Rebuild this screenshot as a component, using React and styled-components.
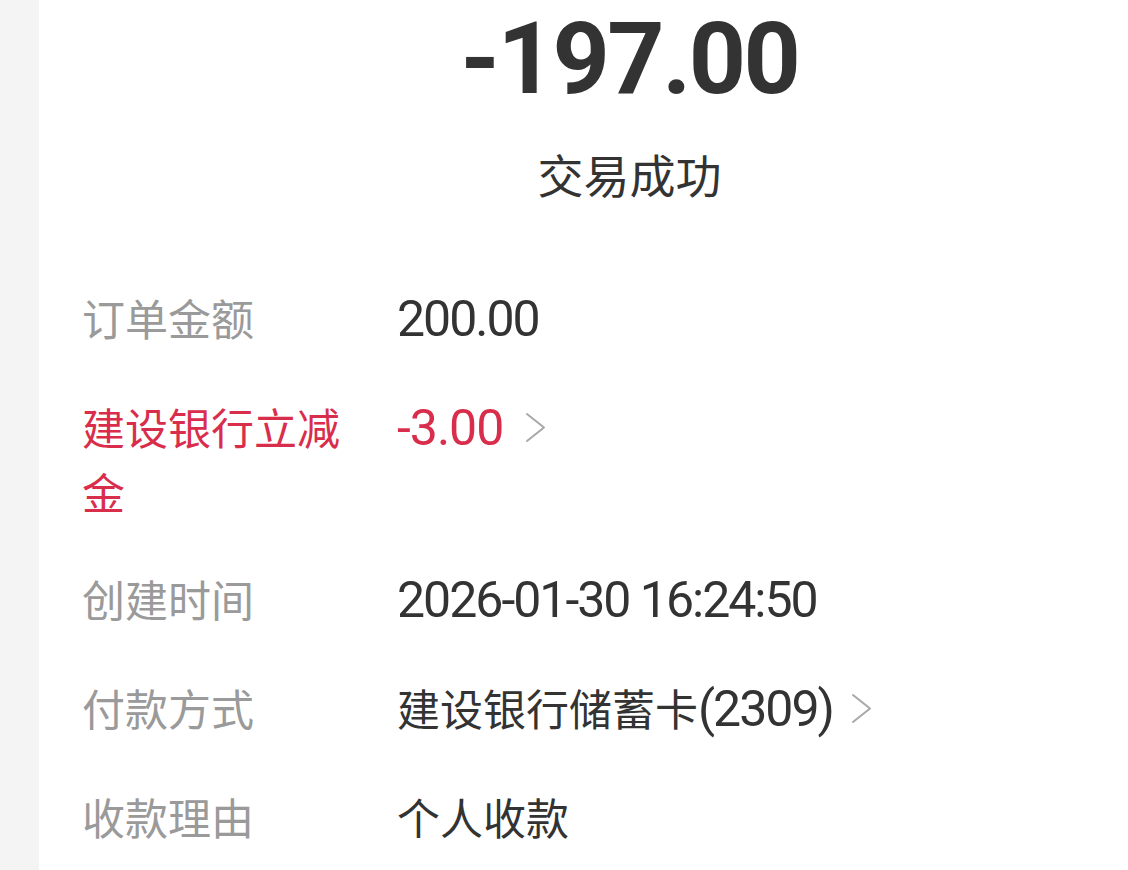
import React from "react";
import styled, { createGlobalStyle } from "styled-components";

const GlobalStyle = createGlobalStyle`
  html, body {
    margin: 0;
    padding: 0;
    background: #ffffff;
  }
  body {
    font-family: "Noto Sans CJK SC", "Noto Sans", sans-serif;
    -webkit-font-smoothing: antialiased;
  }
`;

const Page = styled.div`
  display: flex;
  width: 1128px;
  height: 870px;
  overflow: hidden;
  background: #ffffff;
`;

const SideStrip = styled.div`
  flex: 0 0 39px;
  background: #f4f4f4;
`;

const Panel = styled.main`
  flex: 1;
  display: flex;
  flex-direction: column;
  background: #ffffff;
`;

const Header = styled.header`
  display: flex;
  flex-direction: column;
  align-items: center;
  padding-left: 92px;
`;

const Amount = styled.div`
  margin-top: 9px;
  font-family: "Roboto", "Liberation Sans", sans-serif;
  font-weight: 700;
  font-size: 100px;
  line-height: 100px;
  letter-spacing: -2.5px;
  color: #333333;
`;

const Status = styled.div`
  margin-top: 34px;
  font-family: "Noto Sans CJK SC", sans-serif;
  font-size: 46px;
  line-height: 60px;
  color: #333333;
`;

const DetailList = styled.dl`
  margin: 82px 0 0;
  padding: 0 0 0 43px;
  display: flex;
  flex-direction: column;
  gap: 42px;
`;

const Row = styled.div`
  display: flex;
  align-items: flex-start;
  line-height: 65px;
`;

const Label = styled.dt`
  flex: 0 0 280px;
  margin: 0 35px 0 0;
  font-family: "Noto Sans CJK SC", sans-serif;
  font-size: 43px;
  line-height: 65px;
  color: ${(p) => (p.$accent ? "#d92d4c" : "#9a9a9a")};
`;

const Value = styled.dd`
  margin: 0;
  display: flex;
  align-items: center;
  gap: ${(p) => (p.$accent ? "22px" : "18px")};
  color: ${(p) => (p.$accent ? "#d92d4c" : "#333333")};
`;

const ValueText = styled.span`
  font-family: "Noto Sans CJK SC", sans-serif;
  font-size: 43px;
  line-height: 65px;
  white-space: nowrap;
`;

const Num = styled.span`
  font-family: "Roboto", "Noto Sans", sans-serif;
  font-size: 50px;
  letter-spacing: ${(p) => (p.$loose ? "-1px" : "-2px")};
`;

const ChevronSvg = styled.svg`
  flex: 0 0 auto;
  width: 21px;
  height: 31px;
`;

const Chevron = () => (
  <ChevronSvg viewBox="0 0 21 31" aria-hidden="true">
    <polyline
      points="2,2 19,15.5 2,29"
      fill="none"
      stroke="#a8a8a8"
      strokeWidth="2"
      strokeLinecap="round"
      strokeLinejoin="round"
    />
  </ChevronSvg>
);

const rows = [
  { label: "订单金额", value: [{ num: "200.00" }] },
  { label: "建设银行立减金", value: [{ num: "-3.00", loose: true }], accent: true, link: true },
  { label: "创建时间", value: [{ num: "2026-01-30 16:24:50" }] },
  {
    label: "付款方式",
    value: [{ text: "建设银行储蓄卡" }, { num: "(2309)" }],
    link: true,
  },
  { label: "收款理由", value: [{ text: "个人收款" }] },
];

export default function App() {
  return (
    <>
      <GlobalStyle />
      <Page>
        <SideStrip />
        <Panel>
          <Header>
            <Amount>-197.00</Amount>
            <Status>交易成功</Status>
          </Header>
          <DetailList>
            {rows.map((r) => (
              <Row key={r.label}>
                <Label $accent={r.accent}>{r.label}</Label>
                <Value $accent={r.accent}>
                  <ValueText>
                    {r.value.map((part, i) =>
                      part.num ? (
                        <Num key={i} $loose={part.loose}>{part.num}</Num>
                      ) : (
                        <React.Fragment key={i}>{part.text}</React.Fragment>
                      )
                    )}
                  </ValueText>
                  {r.link && <Chevron />}
                </Value>
              </Row>
            ))}
          </DetailList>
        </Panel>
      </Page>
    </>
  );
}
